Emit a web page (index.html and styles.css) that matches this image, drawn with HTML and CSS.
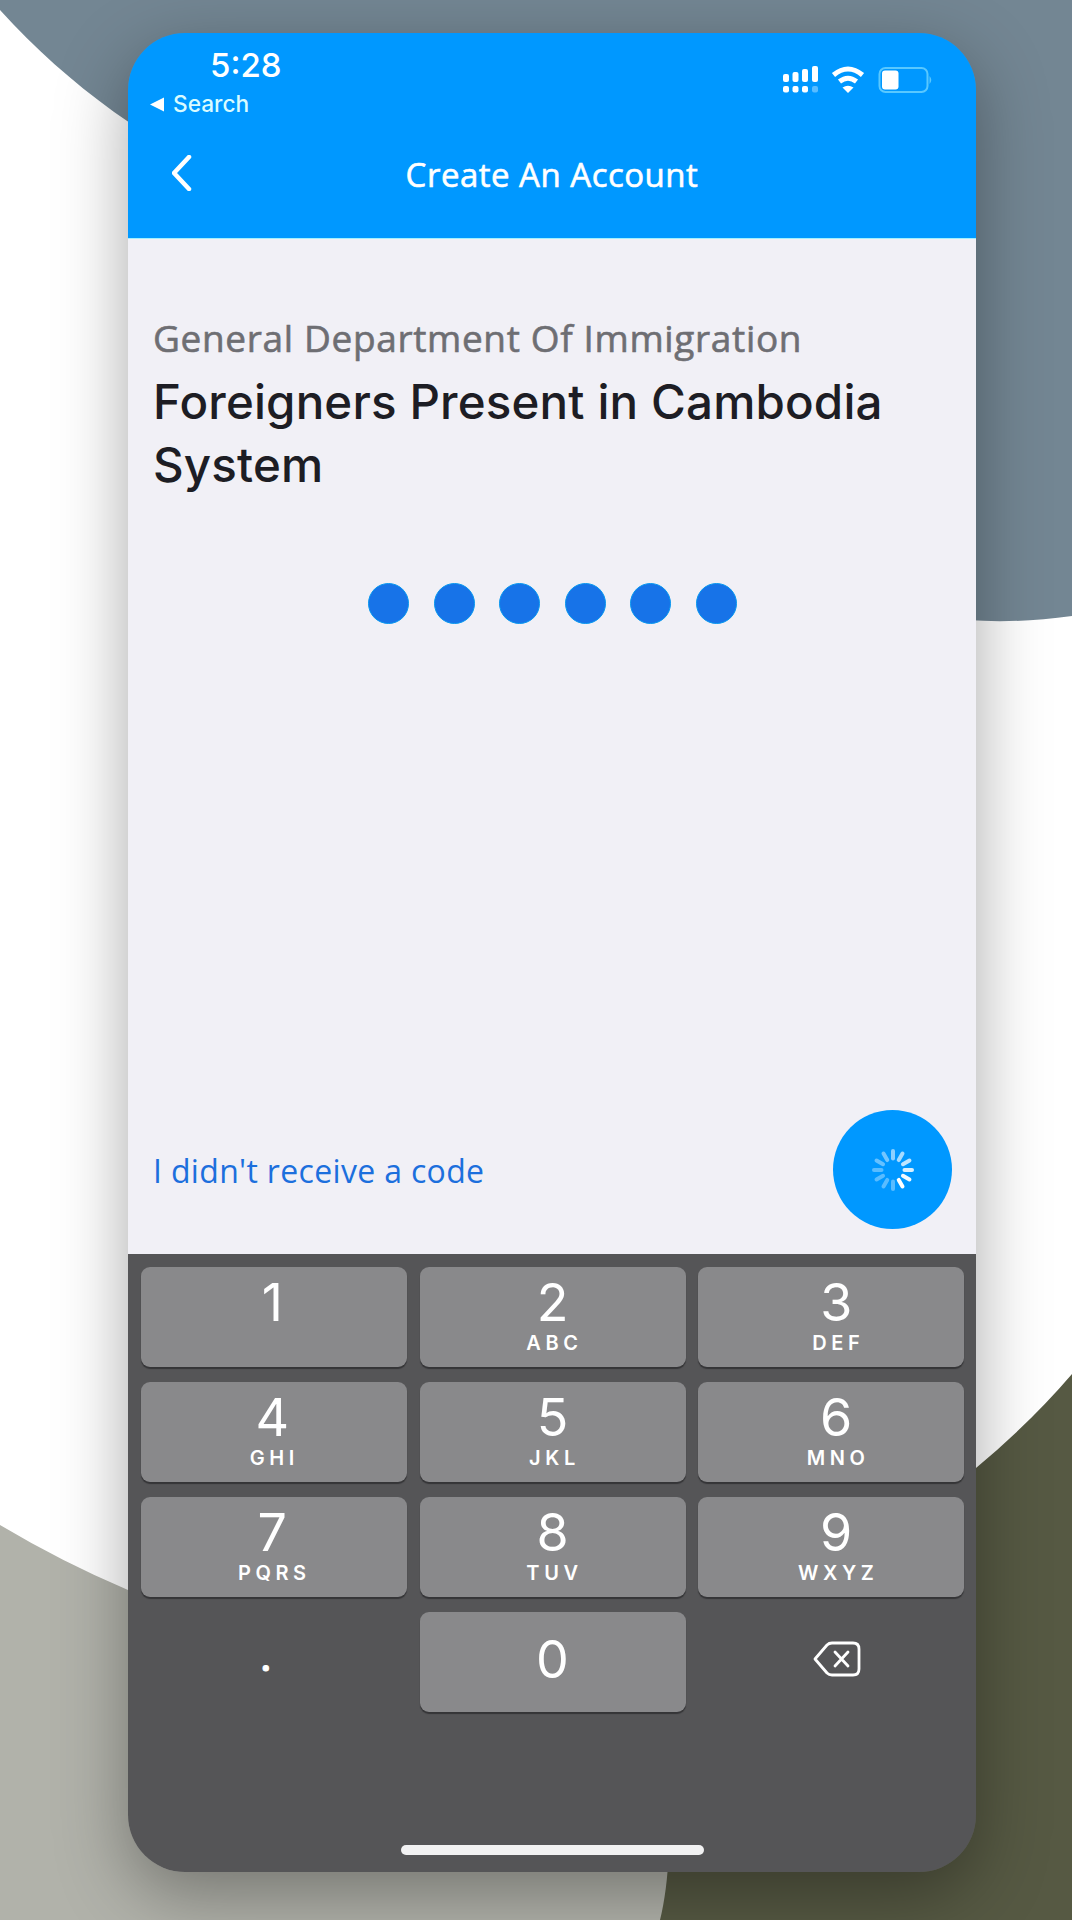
FILE: index.html
```html
<!DOCTYPE html>
<html lang="en">
<head>
<meta charset="utf-8">
<title>Create An Account</title>
<link rel="stylesheet" href="styles.css">
</head>
<body>
<div class="stage">
  <svg class="backdrop" viewBox="0 0 1072 1920" aria-hidden="true">
    <path class="slate" d="M0 10C70 87 150 144 250 190L640 460C780 580 900 640 1072 616V0H0Z"/>
    <path class="olive" d="M1072 1374Q1030 1423 976 1468L600 1700V1920H1072Z"/>
    <path class="sage" d="M0 1525Q62 1562 128 1590L500 1700L669 1850Q667 1892 660 1920H0Z"/>
  </svg>
  <main class="phone">
    <header class="header">
      <div class="status">
        <div class="clock-group">
          <div class="clock">5:28</div>
          <div class="return"><svg class="return-icon" viewBox="0 0 14 14"><path d="M0 7 14 0V14Z"/></svg><span>Search</span></div>
        </div>
        <svg class="status-icons" viewBox="0 0 150 28" aria-hidden="true">
          <g class="solid">
            <rect x="0" y="7" width="6" height="8" rx="2"/><rect x="9.500" y="5" width="6" height="10" rx="2"/><rect x="19" y="2" width="6" height="13" rx="2"/><rect x="29" y="-1" width="6" height="16" rx="2"/>
            <rect x="0" y="19" width="6" height="6.500" rx="2"/><rect x="9.500" y="19" width="6" height="6.500" rx="2"/><rect x="19" y="19" width="6" height="6.500" rx="2"/><rect class="faint" x="29" y="19" width="6" height="6.500" rx="2"/>
            <path d="M59.500 20.500Q65 17 70.500 20.500L65 26Z"/>
            <rect x="99" y="3.500" width="16.500" height="19" rx="3"/>
            <path class="tip" d="M146.500 9Q150 13 146.500 17Z"/>
          </g>
          <path class="wifi" d="M50.500 8Q65-4 79.500 8M56.500 14.500Q65 8 73.500 14.500"/>
          <rect class="battery" x="96.500" y="1" width="48" height="24" rx="6"/>
        </svg>
      </div>
      <nav class="nav">
        <svg class="back" viewBox="0 0 20 36"><path d="M17 2 2 18 17 34"/></svg>
        <h1 class="title">Create An Account</h1>
      </nav>
    </header>
    <section class="content">
      <p class="department">General Department Of Immigration</p>
      <h2 class="system">Foreigners Present in Cambodia<br>System</h2>
      <div class="code"><i></i><i></i><i></i><i></i><i></i><i></i></div>
      <div class="actions">
        <a class="resend">I didn't receive a code</a>
        <div class="submit">
          <svg class="spinner" viewBox="-22 -22 44 44">
            <path d="M0-11.500V-19" opacity=".55"/><path d="M0-11.500V-19" transform="rotate(30)" opacity=".65"/><path d="M0-11.500V-19" transform="rotate(60)" opacity=".75"/><path d="M0-11.500V-19" transform="rotate(90)" opacity=".85"/><path d="M0-11.500V-19" transform="rotate(120)" opacity=".95"/><path d="M0-11.500V-19" transform="rotate(150)"/><path d="M0-11.500V-19" transform="rotate(180)" opacity=".35"/><path d="M0-11.500V-19" transform="rotate(210)" opacity=".35"/><path d="M0-11.500V-19" transform="rotate(240)" opacity=".35"/><path d="M0-11.500V-19" transform="rotate(270)" opacity=".35"/><path d="M0-11.500V-19" transform="rotate(300)" opacity=".4"/><path d="M0-11.500V-19" transform="rotate(330)" opacity=".45"/>
          </svg>
        </div>
      </div>
    </section>
    <section class="keyboard">
      <div class="keys">
        <div class="key left"><b>1</b></div>
        <div class="key"><b>2</b><span>ABC</span></div>
        <div class="key right"><b>3</b><span>DEF</span></div>
        <div class="key left"><b>4</b><span>GHI</span></div>
        <div class="key"><b>5</b><span>JKL</span></div>
        <div class="key right"><b>6</b><span>MNO</span></div>
        <div class="key left"><b>7</b><span>PQRS</span></div>
        <div class="key"><b>8</b><span>TUV</span></div>
        <div class="key right"><b>9</b><span>WXYZ</span></div>
        <div class="key plain"><b class="point">.</b></div>
        <div class="key zero"><b>0</b></div>
        <div class="key plain delete"><svg class="delete-icon" viewBox="0 0 48 36"><path d="M2 18 14 4Q16 2 19 2H40Q46 2 46 8V28Q46 34 40 34H19Q16 34 14 32Z"/><path d="M22 11 35 25M35 11 22 25"/></svg></div>
      </div>
      <div class="home"></div>
    </section>
  </main>
</div>
</body>
</html>
```
FILE: styles.css
```css
* { box-sizing: border-box; }
body { margin: 0; background: #fff; }
.stage { position: relative; width: 1072px; height: 1920px; padding: 33px 0 0 128px; overflow: hidden; }
.backdrop { position: absolute; inset: 0; width: 1072px; height: 1920px; }
.slate { fill: #738693; }
.olive { fill: #565943; }
.sage { fill: #b1b2aa; }
.phone { position: relative; display: flex; flex-direction: column; width: 848px; height: 1839px; overflow: hidden; border-radius: 57px; box-shadow: 0 22px 70px rgba(0, 0, 0, .34); }
.header { height: 205px; background: #0098ff; color: #fff; }
.status { display: flex; justify-content: space-between; height: 105px; padding: 14px 43px 0 22px; }
.clock { padding-left: 60px; font: 500 33px/36px Inter, sans-serif; }
.return { display: flex; align-items: center; gap: 9px; height: 40px; padding-top: 2px; font: 500 22.700px/40px Inter, sans-serif; color: #d9fbff; }
.return-icon { width: 14px; height: 15px; fill: #fff; }
.status-icons { width: 150px; height: 28px; margin-top: 20px; overflow: visible; }
.solid { fill: #fff; }
.faint { opacity: .35; }
.wifi { fill: none; stroke: #fff; stroke-width: 5; }
.battery { fill: none; stroke: #59c8ff; stroke-width: 2; }
.tip { fill: #59c8ff; }
.nav { display: grid; grid-template-columns: 60px 1fr 60px; align-items: center; height: 70px; padding: 0 22px; }
.back { width: 20px; height: 36px; margin-left: 22px; fill: none; stroke: #fff; stroke-width: 4.500; stroke-linecap: round; stroke-linejoin: round; }
.title { margin: 4px 0 0; text-align: center; font: 400 33px/44px "Open Sans", sans-serif; letter-spacing: .5px; -webkit-text-stroke: .6px #fff; }
.content { display: flex; flex-direction: column; height: 1016px; padding: 74px 24px 25px 25px; border-top: 1px solid #a2efff; background: #f1f0f6; }
.department { margin: 0; font: 400 37px/50px "Open Sans", sans-serif; letter-spacing: .65px; -webkit-text-stroke: .6px #6e6e73; color: #6e6e73; }
.system { margin: 7px 0 0; font: 500 47.500px/63px Inter, sans-serif; letter-spacing: .15px; color: #1d1d24; white-space: nowrap; }
.code { display: flex; justify-content: center; gap: 24.600px; margin-top: 87px; }
.code i { width: 41px; height: 41px; border: 1px solid #0798f0; border-radius: 50%; background: #1773e8; }
.actions { display: flex; align-items: center; justify-content: space-between; margin-top: auto; }
.resend { padding-top: 3px; font: 400 32px/44px "Open Sans", sans-serif; letter-spacing: .33px; color: #1c6fdd; }
.submit { display: flex; align-items: center; justify-content: center; width: 119px; height: 119px; border-radius: 50%; background: #0098ff; }
.spinner { width: 44px; height: 44px; fill: none; stroke: #fff; stroke-width: 4; stroke-linecap: round; }
.keyboard { display: flex; flex: 1; flex-direction: column; justify-content: space-between; align-items: center; padding: 13px 12px 17px 13px; background: #555557; }
.keys { display: grid; grid-template-columns: repeat(3, 266px); grid-auto-rows: 100px; gap: 15px 12.700px; }
.key { display: flex; flex-direction: column; align-items: center; padding-top: 10px; border-radius: 9px; background: #89898b; box-shadow: 0 2px 1px #353537; color: #fff; }
.key b { font: 400 52px/52px Inter, sans-serif; }
.key span { margin-top: 3px; padding-left: 4px; font: 600 20px/22px Inter, sans-serif; letter-spacing: 4.600px; }
.left { padding-right: 3px; }
.right { padding-left: 10px; }
.plain { background: none; box-shadow: none; }
.zero { padding-top: 22px; }
.key .point { padding-right: 16px; margin-top: 8px; font-size: 42px; -webkit-text-stroke: 1px #fff; }
.delete { padding: 29px 0 0 11px; }
.delete-icon { width: 48px; height: 36px; fill: none; stroke: #fff; stroke-width: 2.800; stroke-linecap: round; stroke-linejoin: round; }
.home { width: 303px; height: 10px; border-radius: 5px; background: #f1f1f2; }
```
